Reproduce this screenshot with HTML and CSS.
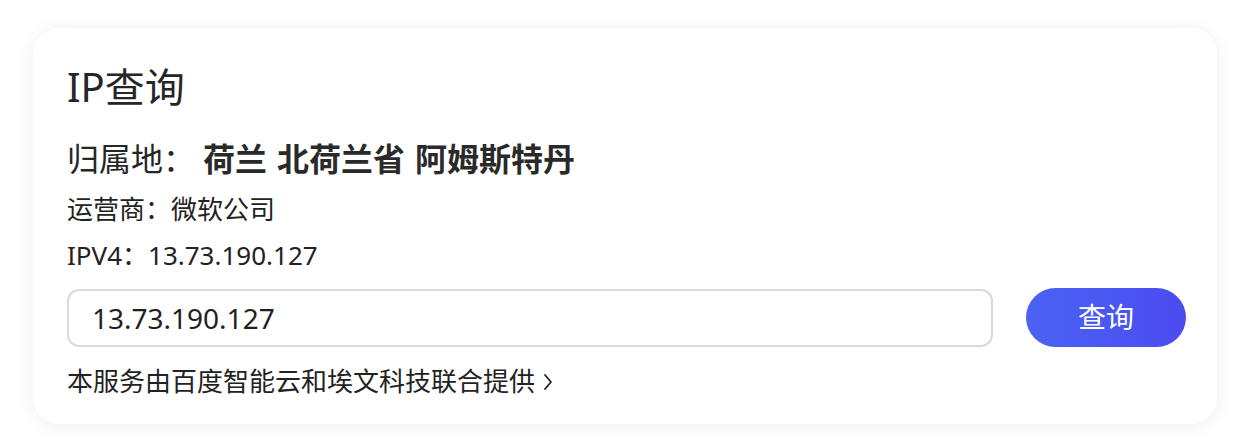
FILE: index.html
```html
<!DOCTYPE html>
<html lang="zh-CN">
<head>
<meta charset="utf-8">
<title>IP查询</title>
<link rel="stylesheet" href="styles.css">
</head>
<body>
<div class="page">
  <section class="card">
    <h1 class="title">IP查询</h1>
    <div class="location">
      <span class="location-label">归属地：</span>
      <span class="location-value">荷兰<span class="sp"></span>北荷兰省<span class="sp"></span>阿姆斯特丹</span>
    </div>
    <div class="info">运营商：微软公司</div>
    <div class="info">IPV4：13.73.190.127</div>
    <div class="search">
      <div class="search-input">13.73.190.127</div>
      <button class="search-btn" type="button">查询</button>
    </div>
    <a class="provider">本服务由百度智能云和埃文科技联合提供<svg class="chev" width="10" height="22" viewBox="0 0 10 22"><polyline points="2,4 8,11 2,18" fill="none" stroke="#222" stroke-width="1.8" stroke-linecap="round" stroke-linejoin="round"/></svg></a>
  </section>
</div>
</body>
</html>
```
FILE: styles.css
```css
* { box-sizing: border-box; }
html, body {
  margin: 0;
  padding: 0;
  background: #ffffff;
}
body {
  font-family: "Noto Sans", "Noto Sans CJK SC", sans-serif;
  color: #222222;
}
.page {
  padding: 28px 27px 18px 33px;
}
.card {
  width: 1184px;
  height: 396px;
  background: #ffffff;
  border-radius: 26px;
  box-shadow: 0 2px 18px rgba(0, 0, 0, 0.07);
  padding: 31px 31px 0 34px;
  display: flex;
  flex-direction: column;
}
.title {
  margin: 0;
  font-size: 40px;
  font-weight: 400;
  line-height: 56px;
  color: #262626;
}
.location {
  margin-top: 22px;
  display: flex;
  align-items: center;
  line-height: 44px;
  font-size: 32px;
  color: #262626;
}
.location-label {
  font-weight: 400;
  margin-right: 8px;
}
.location-value {
  font-weight: 700;
  color: #2a2a2a;
}
.sp {
  display: inline-block;
  width: 10px;
}
.info {
  font-size: 26px;
  line-height: 46px;
}
.location + .info {
  margin-top: 5px;
}
.search {
  margin-top: 10px;
  display: flex;
  align-items: center;
  gap: 33px;
}
.search-input {
  width: 926px;
  height: 58px;
  border: 2px solid #dadada;
  border-radius: 12px;
  padding-left: 23px;
  font-size: 28px;
  line-height: 54px;
  color: #1f1f1f;
}
.search-btn {
  width: 160px;
  height: 59px;
  border: none;
  border-radius: 30px;
  background: linear-gradient(90deg, #4a63f3 0%, #4a56f2 55%, #4c4bf0 100%);
  color: #ffffff;
  font-family: "Noto Sans", "Noto Sans CJK SC", sans-serif;
  font-size: 28px;
  padding: 0;
  line-height: 59px;
}
.provider {
  margin-top: 14px;
  display: flex;
  align-items: center;
  font-size: 26px;
  line-height: 40px;
  color: #222222;
}
.chev {
  margin-left: 8px;
  margin-top: 1px;
}
```
